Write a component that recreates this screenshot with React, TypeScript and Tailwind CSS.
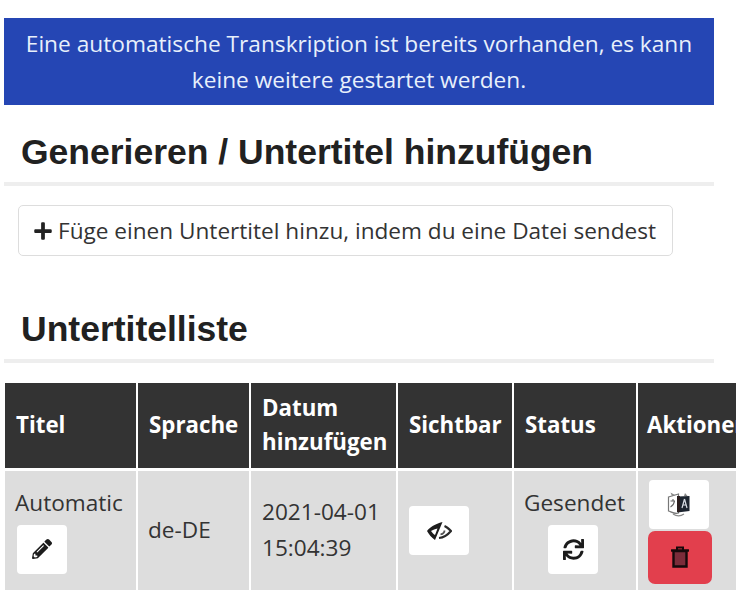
import { FaPencilAlt, FaPlus, FaSync } from "react-icons/fa";

const Sans = "font-['Open_Sans',sans-serif]";

function Heading({ children }: { children: string }) {
  return (
    <div className="border-b-4 border-[#eeeeee] pb-[10px] pl-[17px]">
      <h2 className="font-['Liberation_Sans',sans-serif] text-[35.5px] font-bold leading-[40px] text-[#212121]">{children}</h2>
    </div>
  );
}

function IconButton({ children, w = "w-[50px]", h = "h-[49px]" }: { children: React.ReactNode; w?: string; h?: string }) {
  return <div className={`${w} ${h} flex items-center justify-center rounded-[4px] bg-white text-[#1c1c1c]`}>{children}</div>;
}

function EyeOff() {
  return (
    <svg width="26" height="20" viewBox="0 0 26 20">
      <path
        fillRule="evenodd"
        d="M1 10C4 6 9 3 16.5 1L9 19C5.5 16.5 3 13.5 1 10ZM5 10C6 11.5 7.5 13 9 14L11.5 7.5C9 8 7 8.8 5 10Z"
        fill="#1c1c1c"
      />
      <path d="M18.5 5C21 6 23 8 25 10C22 13.5 18 16.5 13 17" fill="none" stroke="#2a2a2a" strokeWidth="2.2" />
      <path d="M18.5 9.5C18.5 11.5 16.5 13 14.5 13.5" fill="none" stroke="#555555" strokeWidth="1.8" />
    </svg>
  );
}

function Translate() {
  return (
    <svg width="24" height="26" viewBox="0 0 24 26">
      <path d="M1.5 6L11.5 3V22C8 23.5 4.5 21 1.5 20Z" fill="#ffffff" stroke="#777777" strokeWidth="1.2" />
      <path d="M10.5 5.5L22.5 5V20L10.5 21.5Z" fill="#1d2530" />
      <path d="M10 5H13V21H10Z" fill="#2a1e1e" />
      <path d="M17.5 8L15 17M17.5 8L20 17M15.8 14H19" stroke="#d8dde5" strokeWidth="1.2" fill="none" />
      <path d="M3.5 10H8M6 8V10M7.5 10C7 13 5.5 15 3.5 16" stroke="#666666" strokeWidth="1.1" fill="none" />
      <path d="M6 23C10 25.5 14 25 17 23" stroke="#8a8a8a" strokeWidth="1.2" fill="none" />
      <path d="M18 2L20.5 5H17Z" fill="#888888" />
      <path d="M5 5L3.5 1.5L8 4Z" fill="#888888" />
    </svg>
  );
}

function Trash() {
  return (
    <svg width="20" height="22" viewBox="0 0 20 22">
      <path d="M1 4.5H19" stroke="#15090b" strokeWidth="2.4" />
      <path d="M7 4V1.5H13V4" stroke="#15090b" strokeWidth="2" fill="none" />
      <path d="M3.5 5H16.5V20.5H3.5Z" fill="#7b2c3a" stroke="#15090b" strokeWidth="2.4" />
    </svg>
  );
}

const th = "bg-[#333333] pb-[2px] pl-[11px] pr-0 align-middle text-left text-[22.3px] font-bold leading-[34px] text-white";
const td = "bg-[#dddddd] pl-[10px] pr-0 align-middle text-[22.6px] font-normal leading-[33px] text-[#333333]";

export default function App() {
  return (
    <div className={`${Sans} h-[600px] w-[736px] overflow-hidden bg-white pt-[18px]`}>
      <div className="ml-[4px] w-[710px]">
        <div className="h-[87px] whitespace-nowrap bg-[#2546b4] pt-[8px] text-center text-[22.7px] font-medium leading-[36px] text-[#e8f0fb]">
          Eine automatische Transkription ist bereits vorhanden, es kann
          <br />
          keine weitere gestartet werden.
        </div>
        <div className="mt-[27px]">
          <Heading>Generieren / Untertitel hinzufügen</Heading>
        </div>
        <div className="ml-[14px] mt-[19px] flex h-[51px] w-[655px] items-center gap-[5px] rounded-[5px] border border-[#dddddd] pl-[14px] text-[#333333]">
          <FaPlus className="h-[20px] w-[20px] shrink-0 text-[#222222]" />
          <span className="whitespace-nowrap text-[22.6px]">Füge einen Untertitel hinzu, indem du eine Datei sendest</span>
        </div>
        <div className="mt-[53px]">
          <Heading>Untertitelliste</Heading>
        </div>
      </div>
      <table className="ml-[3px] mt-[17px] w-[777px] table-fixed border-separate border-spacing-x-[2px] border-spacing-y-[3px]">
        <colgroup>
          <col className="w-[131px]" />
          <col className="w-[111px]" />
          <col className="w-[145px]" />
          <col className="w-[114px]" />
          <col className="w-[122px]" />
          <col className="w-[140px]" />
        </colgroup>
        <thead>
          <tr className="h-[85px]">
            <th className={th}>Titel</th>
            <th className={th}>Sprache</th>
            <th className={th}>Datum hinzufügen</th>
            <th className={th}>Sichtbar</th>
            <th className={th}>Status</th>
            <th className="bg-[#333333] pb-[2px] pl-[9px] pr-0 align-middle text-left text-[22.3px] font-bold leading-[34px] text-white">Aktionen</th>
          </tr>
        </thead>
        <tbody>
          <tr className="h-[119px]">
            <td className={td}>
              Automatic
              <div className="ml-[2px] mb-[2px] mt-[6px]">
                <IconButton>
                  <FaPencilAlt className="h-[20px] w-[20px]" />
                </IconButton>
              </div>
            </td>
            <td className={td}>
              <span className="block pb-[2px]">de-DE</span>
            </td>
            <td className={td}>
              <div className="pb-[2px] pl-[1px] leading-[36px]">
                <span className="block">2021-04-01</span>
                <span className="block">15:04:39</span>
              </div>
            </td>
            <td className={td}>
              <div className="pl-[1px]">
                <IconButton w="w-[60px]">
                  <EyeOff />
                </IconButton>
              </div>
            </td>
            <td className={td}>
              <span className="block">Gesendet</span>
              <div className="ml-[24px] mb-[2px] mt-[6px]">
                <IconButton>
                  <FaSync className="h-[21px] w-[21px]" />
                </IconButton>
              </div>
            </td>
            <td className={td}>
              <div className="flex flex-col items-start pl-[1px] pt-[2px]">
                <IconButton w="w-[60px]">
                  <Translate />
                </IconButton>
                <div className="-ml-[1px] mt-[2px] flex h-[53px] w-[64px] items-center justify-center rounded-[7px] bg-[#e23f4d]">
                  <Trash />
                </div>
              </div>
            </td>
          </tr>
        </tbody>
      </table>
    </div>
  );
}
